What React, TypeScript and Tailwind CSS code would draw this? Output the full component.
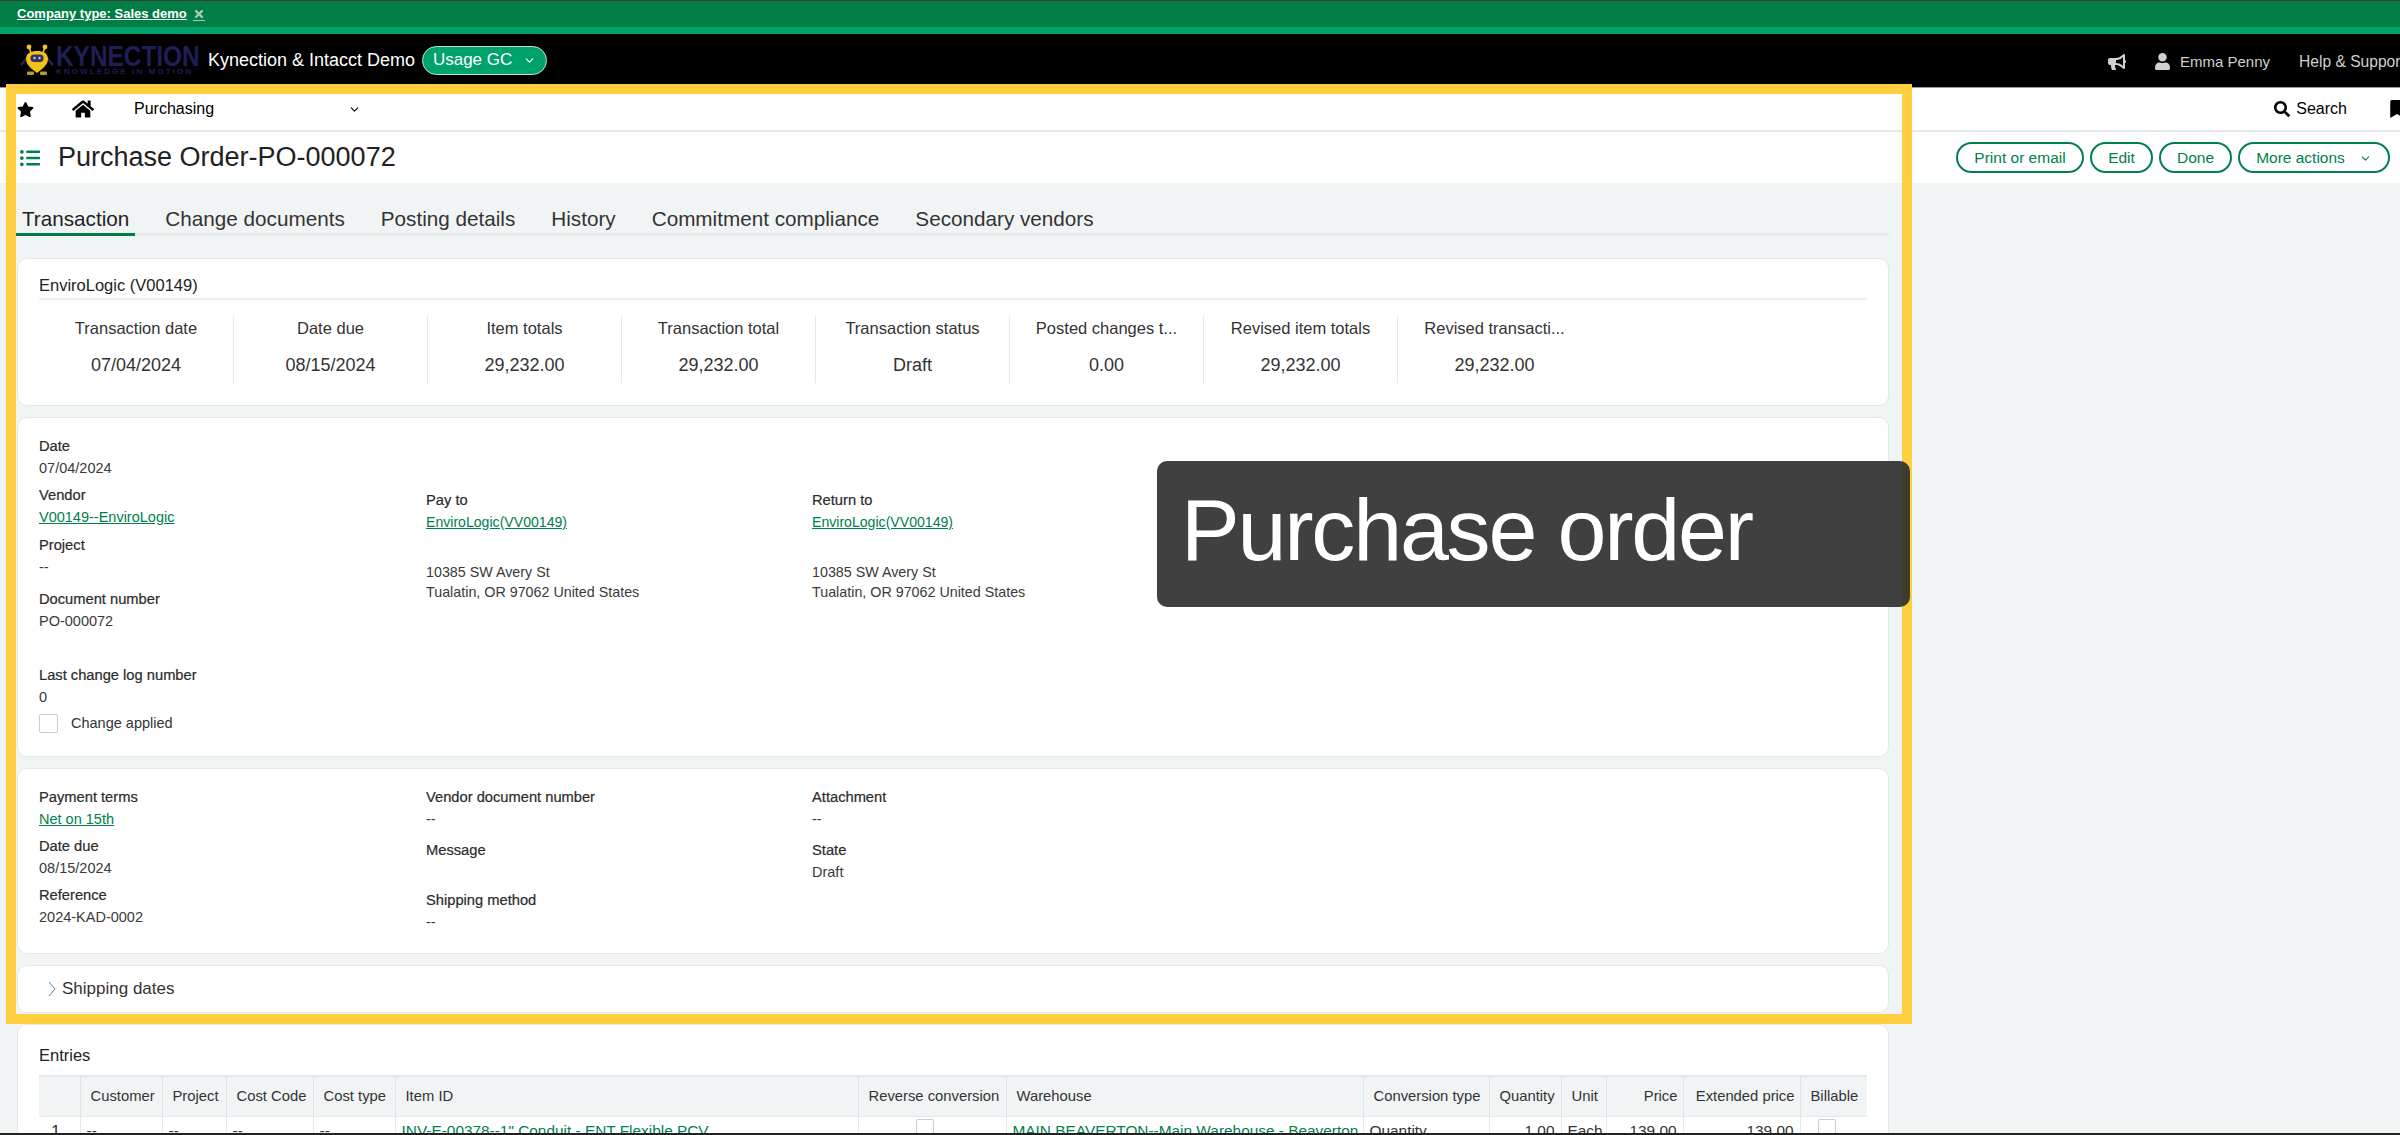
import { ChevronDown } from "lucide-react";
import { FaBookmark, FaBullhorn, FaHome, FaListUl, FaSearch, FaStar, FaTimes, FaUser } from "react-icons/fa";

const stats = [
  ["Transaction date", "07/04/2024"],
  ["Date due", "08/15/2024"],
  ["Item totals", "29,232.00"],
  ["Transaction total", "29,232.00"],
  ["Transaction status", "Draft"],
  ["Posted changes t...", "0.00"],
  ["Revised item totals", "29,232.00"],
  ["Revised transacti...", "29,232.00"],
];

const tabs = ["Transaction", "Change documents", "Posting details", "History", "Commitment compliance", "Secondary vendors"];

function Mascot() {
  return (
    <svg width="34" height="32" viewBox="0 0 34 32" className="shrink-0">
      <path d="M11 9 L9 3 M23 9 L25 3" stroke="#f2c21a" strokeWidth="1.6" />
      <circle cx="9" cy="3" r="2.4" fill="#f2c21a" />
      <circle cx="25" cy="3" r="2.4" fill="#f2c21a" />
      <path d="M7 14 L1 21 M27 14 L33 21" stroke="#2a2a55" strokeWidth="2" />
      <path d="M6 15 C6 9 11 7 17 7 C23 7 28 9 28 15 C28 21 22 25 17 29 C12 25 6 21 6 15 Z" fill="#f2c21a" />
      <rect x="10.5" y="10.5" width="13" height="7.5" rx="3.5" fill="#33335f" />
      <circle cx="14.5" cy="14" r="1.2" fill="#c9c9e6" />
      <circle cx="19.5" cy="14" r="1.2" fill="#c9c9e6" />
      <rect x="7" y="27.5" width="7" height="3.5" rx="1" fill="#b99a2a" />
      <rect x="20" y="27.5" width="7" height="3.5" rx="1" fill="#b99a2a" />
    </svg>
  );
}

function Field({ label, value, link, className }: { label: string; value?: string; link?: boolean; className?: string }) {
  return (
    <div className={className}>
      <div className="text-[14.7px] leading-[21px] text-[#2b2b2b] [-webkit-text-stroke:0.2px_#2b2b2b]">{label}</div>
      {value && (
        <div className={link ? "text-[14.5px] leading-[22px] text-[#00804a] underline" : "text-[14.5px] leading-[22px] text-[#3a3a3a]"}>{value}</div>
      )}
    </div>
  );
}

// address block shared by Pay to / Return to
function Address({ label }: { label: string }) {
  return (
    <div className="pt-[54px]">
      <div className="text-[14.7px] leading-[21px] text-[#2b2b2b] [-webkit-text-stroke:0.2px_#2b2b2b]">{label}</div>
      <div className="text-[14.1px] leading-[22px] text-[#00804a] underline">EnviroLogic(VV00149)</div>
      <div className="mt-[29px] text-[14.3px] leading-[20px] text-[#3a3a3a]">10385 SW Avery St</div>
      <div className="text-[14.3px] leading-[20px] text-[#3a3a3a]">Tualatin, OR 97062 United States</div>
    </div>
  );
}

function Pill({ children, className }: { children: React.ReactNode; className: string }) {
  return (
    <button className={`flex h-[31px] items-center rounded-full border-2 border-[#00804a] pt-px text-[15.5px] text-[#00804a] ${className}`}>
      {children}
    </button>
  );
}

function Th({ children, right }: { children: React.ReactNode; right?: boolean }) {
  return (
    <th className={`border-l border-[#dfe3e6] pr-[5px] text-[14.8px] font-normal text-[#333] ${right ? "text-right" : "pl-[10px] text-left"}`}>{children}</th>
  );
}

function Td({ children, right, green }: { children?: React.ReactNode; right?: boolean; green?: boolean }) {
  return (
    <td className={`overflow-hidden whitespace-nowrap border-l border-[#e6e9eb] px-[6px] pt-[2px] align-top text-[15.4px] ${right ? "text-right" : "text-left"} ${green ? "text-[#00804a]" : "text-[#333]"}`}>
      {children}
    </td>
  );
}

export default function App() {
  return (
    <div className="relative h-[1135px] w-full overflow-hidden bg-[#f1f4f5] font-['Liberation_Sans',Arial,sans-serif]">
      <div className="h-px bg-[#3a3a3a]" />
      <div className="flex h-[26px] items-center bg-[#007e45] pl-[17px] text-[13px] font-bold text-white">
        <span className="underline">Company type: Sales demo</span>
        <span className="ml-[6px] border-b border-[#a8cdb9] text-[12px] text-[#a8cdb9]">
          <FaTimes />
        </span>
      </div>
      <div className="h-[7px] bg-[#00a26b]" />

      <header className="flex h-[53px] items-center bg-black pb-px">
        <div className="ml-[20px] flex w-[178px] items-center gap-[2px]">
          <Mascot />
          <div className="flex flex-col leading-none text-[#1f1f55]">
            <span className="origin-left scale-y-[1.2] text-[24.4px] font-bold leading-[23px]">KYNECTION</span>
            <span className="text-[8px] font-bold leading-[9px] tracking-[2.1px]">KNOWLEDGE IN MOTION</span>
          </div>
        </div>
        <span className="ml-[10px] text-[18px] text-white">Kynection &amp; Intacct Demo</span>
        <button className="ml-[7px] flex h-[29px] w-[125px] items-center justify-center gap-[11px] rounded-full border border-[#bfe6d6] bg-[#00a26b] text-[17px] text-white">
          Usage GC
          <ChevronDown size={13} />
        </button>
        <div className="ml-auto flex items-center whitespace-nowrap pt-[4px] text-[15px] text-[#d0d0d0]">
          <FaBullhorn className="mr-[28px] text-[18px]" />
          <FaUser className="mr-[9px] text-[17px]" />
          <span className="mr-[29px]">Emma Penny</span>
          <span className="w-[101px] overflow-hidden text-[15.6px]">Help &amp; Support</span>
        </div>
      </header>

      <nav className="flex h-[45px] items-center border-b-2 border-t border-[#e6e9eb] border-t-[#999] bg-white text-[16px] text-black">
        <FaStar className="ml-[17px] text-[17px]" />
        <FaHome className="ml-[38px] text-[22px]" />
        <span className="ml-[40px]">Purchasing</span>
        <ChevronDown size={13} className="ml-[134px]" />
        <FaSearch className="ml-auto text-[16px]" />
        <span className="ml-[6px] mr-[41px]">Search</span>
        <FaBookmark className="-mr-[6px] text-[18px]" />
      </nav>

      <div className="flex h-[51px] items-center bg-white">
        <FaListUl className="ml-[20px] text-[20px] text-[#00804a]" />
        <h1 className="ml-[18px] text-[27px] text-[#222]">Purchase Order-PO-000072</h1>
        <div className="ml-auto mr-[10px] flex gap-[6px]">
          <Pill className="w-[128px] justify-center">Print or email</Pill>
          <Pill className="w-[63px] justify-center">Edit</Pill>
          <Pill className="w-[73px] justify-center">Done</Pill>
          <Pill className="w-[152px] justify-center gap-[14px]">
            More actions
            <ChevronDown size={13} />
          </Pill>
        </div>
      </div>

      <main className="ml-[16px] w-[1873px]">
        <div className="flex h-[53px] items-end gap-[24px] border-b-[3px] border-[#e8ebed]">
          {tabs.map((t, i) => (
            <div key={t} className={i === 0 ? "-mb-[3px] h-[37px] border-b-[3px] border-[#007e45] px-[6px] text-[20.7px] leading-[39px] text-[#222]" : "-mb-[3px] h-[37px] px-[6px] text-[20.7px] leading-[39px] text-[#333]"}>
              {t}
            </div>
          ))}
        </div>

        <div className="ml-px mt-[22px] flex flex-col gap-[11px]">
          <section className="h-[148px] rounded-[10px] border border-[#e4e8ea] bg-white px-[21px]">
            <div className="flex h-[41px] items-center border-b-2 border-[#eceff1] pt-[13px] text-[16.5px] text-[#222]">EnviroLogic (V00149)</div>
            <div className="mt-[16px] flex">
              {stats.map(([label, value], i) => (
                <div key={label} className={i === 0 ? "flex h-[67px] w-[194px] flex-col items-center" : "flex h-[67px] w-[194px] flex-col items-center border-l border-[#e4e8ea]"}>
                  <span className="mt-[2px] text-[16.5px] leading-[20px] text-[#333]">{label}</span>
                  <span className="mt-[17px] text-[18px] leading-[20px] text-[#333]">{value}</span>
                </div>
              ))}
            </div>
          </section>

          <section className="grid h-[340px] grid-cols-[387px_386px_1fr] rounded-[10px] border border-[#e4e8ea] bg-white pl-[21px] pt-[18px]">
            <div>
              <Field label="Date" value="07/04/2024" className="mb-[6px]" />
              <Field label="Vendor" value="V00149--EnviroLogic" link className="mb-[7px]" />
              <Field label="Project" value="--" className="mb-[11px]" />
              <Field label="Document number" value="PO-000072" className="mb-[33px]" />
              <Field label="Last change log number" value="0" />
              <div className="mt-[5px] flex items-center gap-[13px]">
                <span className="h-[19px] w-[19px] rounded-[2px] border border-[#c8ced2] bg-white" />
                <span className="text-[14.5px] text-[#333]">Change applied</span>
              </div>
            </div>
            <Address label="Pay to" />
            <Address label="Return to" />
          </section>

          <section className="grid h-[186px] grid-cols-[387px_386px_1fr] rounded-[10px] border border-[#e4e8ea] bg-white pl-[21px] pt-[18px]">
            <div>
              <Field label="Payment terms" value="Net on 15th" link className="mb-[6px]" />
              <Field label="Date due" value="08/15/2024" className="mb-[6px]" />
              <Field label="Reference" value="2024-KAD-0002" />
            </div>
            <div>
              <Field label="Vendor document number" value="--" className="mb-[10px]" />
              <Field label="Message" className="mb-[29px]" />
              <Field label="Shipping method" value="--" />
            </div>
            <div>
              <Field label="Attachment" value="--" className="mb-[10px]" />
              <Field label="State" value="Draft" />
            </div>
          </section>

          <section className="flex h-[48px] items-center rounded-[10px] border border-[#e4e8ea] bg-white pl-[29px]">
            <svg width="10" height="16" viewBox="0 0 10 16" fill="none" stroke="#777" strokeWidth="1">
              <path d="M2 1 L8 8 L2 15" />
            </svg>
            <span className="ml-[5px] text-[17px] text-[#333]">Shipping dates</span>
          </section>

          <section className="h-[200px] rounded-[10px] border border-[#e4e8ea] bg-white px-[21px] pt-[20px]">
            <div className="text-[16.5px] leading-[20px] text-[#222]">Entries</div>
            <table className="mt-[10px] w-[1828px] table-fixed border-collapse">
              <colgroup>
                <col className="w-[41px]" />
                <col className="w-[82px]" />
                <col className="w-[64px]" />
                <col className="w-[87px]" />
                <col className="w-[82px]" />
                <col className="w-[463px]" />
                <col className="w-[148px]" />
                <col className="w-[357px]" />
                <col className="w-[126px]" />
                <col className="w-[72px]" />
                <col className="w-[45px]" />
                <col className="w-[77px]" />
                <col className="w-[117px]" />
                <col className="w-[67px]" />
              </colgroup>
              <thead>
                <tr className="h-[40px] border-b border-t-2 border-[#e4e8ea] bg-[#f1f4f5]">
                  <th />
                  <Th>Customer</Th>
                  <Th>Project</Th>
                  <Th>Cost Code</Th>
                  <Th>Cost type</Th>
                  <Th>Item ID</Th>
                  <Th>Reverse conversion</Th>
                  <Th>Warehouse</Th>
                  <Th>Conversion type</Th>
                  <Th>Quantity</Th>
                  <Th>Unit</Th>
                  <Th right>Price</Th>
                  <Th right>Extended price</Th>
                  <Th>Billable</Th>
                </tr>
              </thead>
              <tbody>
                <tr className="h-[40px]">
                  <td className="pl-[12px] pt-[2px] text-left align-top text-[17px] text-[#333]">1</td>
                  <Td>--</Td>
                  <Td>--</Td>
                  <Td>--</Td>
                  <Td>--</Td>
                  <Td green>INV-E-00378--1" Conduit - ENT Flexible PCV</Td>
                  <Td>
                    <span className="ml-[51px] block h-[19px] w-[18px] rounded-[2px] border border-[#c8ced2]" />
                  </Td>
                  <Td green>MAIN BEAVERTON--Main Warehouse - Beaverton</Td>
                  <Td>Quantity</Td>
                  <Td right>1.00</Td>
                  <Td>Each</Td>
                  <Td right>139.00</Td>
                  <Td right>139.00</Td>
                  <Td>
                    <span className="ml-[11px] block h-[19px] w-[18px] rounded-[2px] border border-[#c8ced2]" />
                  </Td>
                </tr>
              </tbody>
            </table>
          </section>
        </div>
      </main>

      {/* annotation drawn over the page */}
      <div className="pointer-events-none absolute left-[6px] top-[84px] h-[940px] w-[1906px] border-[10px] border-[#ffcf40]" />
      <div className="absolute left-[1157px] top-[461px] flex h-[146px] w-[753px] items-center rounded-[10px] bg-[#2b2b2b]/90 pb-[8px] pl-[24px]">
        <span className="text-[88px] leading-none tracking-[-2.2px] text-white">Purchase order</span>
      </div>
      <div className="absolute bottom-0 left-0 h-[2px] w-full bg-[#222]" />
    </div>
  );
}
